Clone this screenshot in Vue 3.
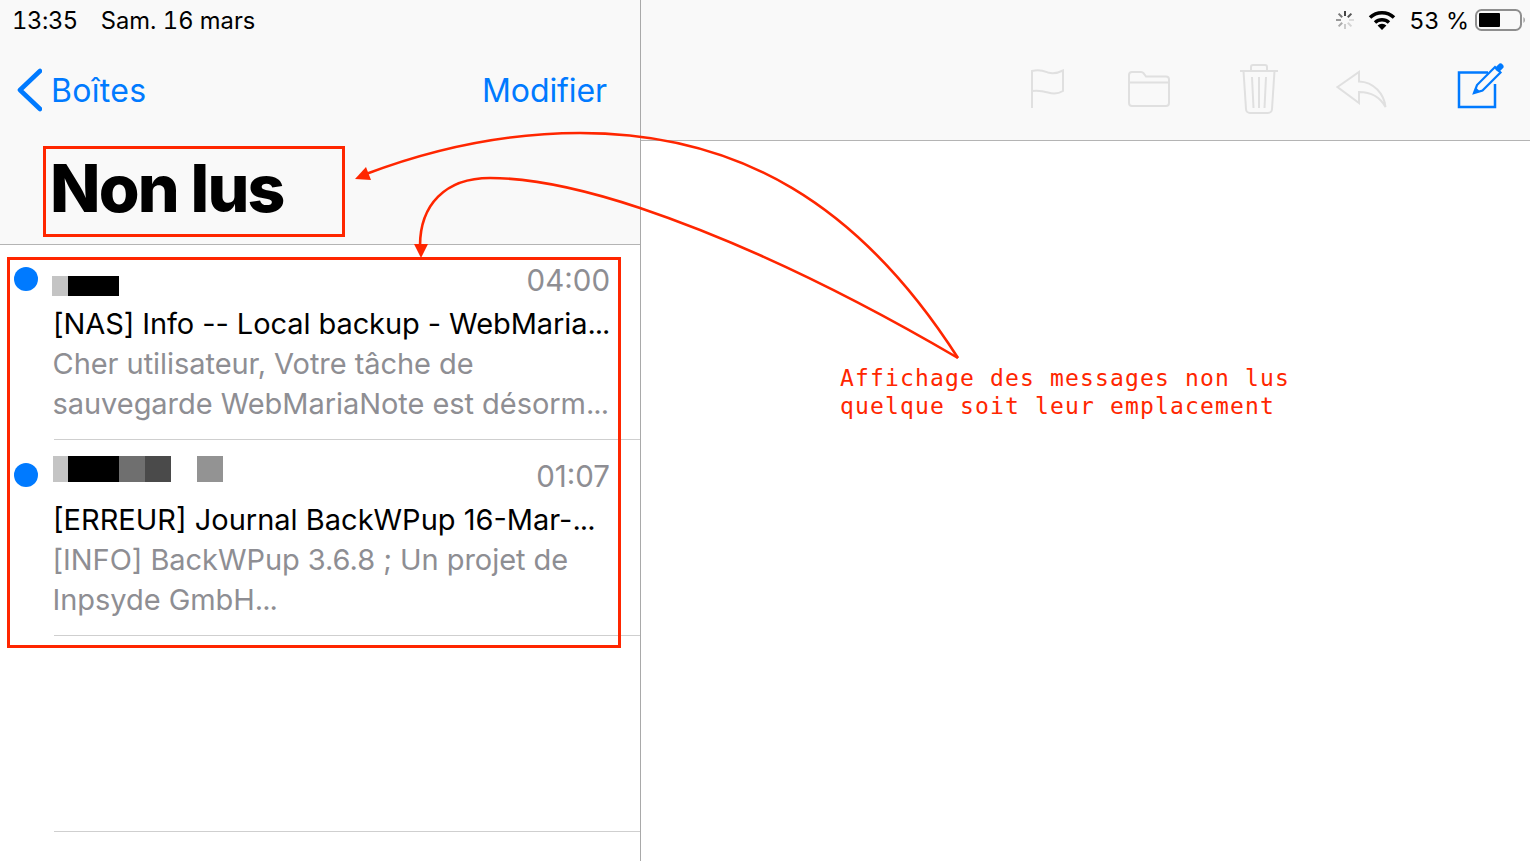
<script setup>
const messages = [
  { id: 1, time: '04:00', subject: '[NAS] Info -- Local backup - WebMaria', l1: 'Cher utilisateur, Votre tâche de', l2: 'sauvegarde WebMariaNote est désorm', blocks: [['#c4c4c4', 16], ['#000', 51]], tall: false },
  { id: 2, time: '01:07', subject: '[ERREUR] Journal BackWPup 16-Mar-', l1: '[INFO] BackWPup 3.6.8 ; Un projet de', l2: 'Inpsyde GmbH', blocks: [['#c4c4c4', 15], ['#000', 51], ['#6f6f6f', 26], ['#4a4a4a', 26], ['transparent', 26], ['#939393', 26]], tall: true },
]
</script>

<template>
  <div class="screen">
    <section class="left">
      <header class="left-head">
        <div class="status">
          <span class="time">13:35</span>
          <span class="date">Sam. 16 mars</span>
        </div>
        <nav class="nav">
          <a class="back">
            <svg width="26" height="44" viewBox="0 0 26 44"><path d="M24 3 L4 22 L24 41" fill="none" stroke="#007aff" stroke-width="4.6" stroke-linecap="round" stroke-linejoin="round"/></svg>
            <span>Boîtes</span>
          </a>
          <a class="edit">Modifier</a>
        </nav>
        <h1 class="title">Non lus</h1>
      </header>
      <ul class="list">
        <li v-for="m in messages" :key="m.id" class="msg" :class="{ tall: m.tall }">
          <span class="dot"></span>
          <div class="body">
            <div class="top">
              <div class="sender">
                <i v-for="(b, i) in m.blocks" :key="i" :style="{ background: b[0], width: b[1] + 'px' }"></i>
              </div>
              <span class="when">{{ m.time }}</span>
            </div>
            <div class="subject">{{ m.subject }}<span class="ell">...</span></div>
            <div class="preview">{{ m.l1 }}</div>
            <div class="preview">{{ m.l2 }}<span class="ell">...</span></div>
          </div>
        </li>
        <li class="empty"></li>
      </ul>
    </section>

    <section class="right">
      <header class="right-head">
        <div class="sys">
          <svg width="20" height="20" viewBox="0 0 20 20" class="spin">
            <g stroke-width="2" stroke-linecap="butt">
              <path d="M10 1v5" stroke="#444"/>
              <path d="M16.4 3.6 12.8 7.2" stroke="#555"/>
              <path d="M19 10h-5" stroke="#ddd"/>
              <path d="M16.4 16.4 12.8 12.8" stroke="#d4d4d4"/>
              <path d="M10 19v-5" stroke="#ccc"/>
              <path d="M3.6 16.4 7.2 12.8" stroke="#aaa"/>
              <path d="M1 10h5" stroke="#999"/>
              <path d="M3.6 3.6 7.2 7.2" stroke="#777"/>
            </g>
          </svg>
          <svg width="28" height="20" viewBox="0 0 28 20" class="wifi" fill="none">
            <path d="M2 7.500A17.500 17.500 0 0 1 26 7.500" stroke="#000" stroke-width="3.600"/>
            <path d="M7 12.500A10.200 10.200 0 0 1 21 12.500" stroke="#000" stroke-width="3.400"/>
            <path d="M14 20 9.600 15.600A6.400 6.400 0 0 1 18.400 15.600Z" fill="#000"/>
          </svg>
          <span class="pct">53 %</span>
          <svg width="55" height="24" viewBox="0 0 55 24" class="batt">
            <rect x="1" y="2" width="45" height="20" rx="5.500" fill="none" stroke="#8e8e8e" stroke-width="2"/>
            <rect x="4" y="5" width="21" height="14" rx="1" fill="#000"/>
            <path d="M48.500 9a4 4 0 0 1 0 6Z" fill="#8e8e8e"/>
          </svg>
        </div>
        <div class="tools">
          <svg class="t-flag" width="36" height="40" viewBox="0 0 36 40" fill="none" stroke="#e0e0e0" stroke-width="2">
            <path d="M2 40V3C10 1 14 3 18 4.500C23 6 28 5 33 2.500V23C28 26 23 26 18 24.500C13 23 8 22 2 23"/>
          </svg>
          <svg class="t-folder" width="44" height="38" viewBox="0 0 44 38" fill="none" stroke="#e0e0e0" stroke-width="2">
            <path d="M2 5a3 3 0 0 1 3-3h9a3 3 0 0 1 2.500 1.200L19 6.500h20a3 3 0 0 1 3 3V33a3 3 0 0 1-3 3H5a3 3 0 0 1-3-3Z"/>
            <path d="M2 12.500H42"/>
          </svg>
          <svg class="t-trash" width="38" height="50" viewBox="0 0 38 50" fill="none" stroke="#e0e0e0" stroke-width="2">
            <path d="M0 7h38"/>
            <path d="M11 7V3a2 2 0 0 1 2-2h12a2 2 0 0 1 2 2v4"/>
            <path d="M3.500 7 6 45a4 4 0 0 0 4 4h18a4 4 0 0 0 4-4l2.500-38"/>
            <path d="M12 13l1.500 31M19 13v31M26 13l-1.500 31"/>
          </svg>
          <svg class="t-reply" width="51" height="39" viewBox="0 0 51 39" fill="none" stroke="#e0e0e0" stroke-width="2">
            <path d="M1.500 17 23 2V11.500C38 12 48 24 49.500 37C44 27 36 22 23 22V33Z"/>
          </svg>
          <svg class="t-compose" width="50" height="48" viewBox="0 0 50 48" fill="none">
            <path d="M32 10.500H3V45H39V22" stroke="#007aff" stroke-width="2.500"/>
            <path d="M18 31 21 23 39 5 44.500 10.500 26.500 28.500Z" stroke="#007aff" stroke-width="2.200" fill="#fafafa"/>
            <path d="M18 31 20 25.500 23.500 29Z" fill="#007aff"/>
            <path d="M42.500 6.500 44.500 4.500" stroke="#007aff" stroke-width="6" stroke-linecap="round"/>
          </svg>
        </div>
      </header>
    </section>

    <svg class="arrows" width="1530" height="861" viewBox="0 0 1530 861" fill="none">
      <path d="M366 174C440 146 510 133 580 133C740 133 860 205 958 358" stroke="#ff2600" stroke-width="2.600"/>
      <path d="M958 358C830 283 720 235 640 208C580 188 530 178 490 178C445 178 420 205 420 246" stroke="#ff2600" stroke-width="2.600"/>
      <path d="M355 179 366 167 371 180Z" fill="#ff2600"/>
      <path d="M421 258 414 244H428Z" fill="#ff2600"/>
    </svg>
    <div class="box box-title"></div>
    <div class="box box-list"></div>
    <p class="note">Affichage des messages non lus<br>quelque soit leur emplacement</p>
  </div>
</template>

<style>
html, body { margin: 0; background: #fff; }
</style>

<style scoped>
.screen { position: relative; display: flex; width: 1530px; height: 861px; overflow: hidden; background: #fff; font-family: Inter, "Liberation Sans", sans-serif; color: #000; }
.left { width: 640px; flex: none; border-right: 1px solid #a9a9a9; }
.right { flex: 1; }
.left-head { height: 244px; background: #f9f9f9; border-bottom: 1px solid #b4b4b4; }
.status { display: flex; gap: 23px; padding: 6px 0 0 12px; font-size: 23.700px; line-height: 30px; font-variant-numeric: tabular-nums; }
.time { letter-spacing: -0.400px; }
.nav { display: flex; justify-content: space-between; align-items: center; height: 44px; margin-top: 32px; padding: 0 33px 0 16px; font-size: 32px; color: #007aff; }
.back { display: flex; align-items: center; gap: 9px; letter-spacing: 0.300px; }
.edit { letter-spacing: -0.100px; }
.title { margin: 38px 0 0 50px; font-size: 66px; line-height: 76px; font-weight: 800; letter-spacing: -1.800px; }
.list { margin: 0; padding: 0; list-style: none; }
.msg { display: flex; height: 195px; }
.msg.tall { height: 196px; }
.dot { flex: none; width: 24px; height: 24px; margin: 22px 16px 0 14px; border-radius: 50%; background: #007aff; }
.tall .dot { margin-top: 23px; }
.body { flex: 1; min-width: 0; padding: 17px 30px 0 0; border-bottom: 1px solid #cfcfcf; }
.tall .body { padding-top: 18px; }
.top { display: flex; justify-content: space-between; height: 42px; }
.sender { display: flex; height: 20px; margin: 14px 0 0 -2px; }
.tall .sender { height: 26px; margin: -2px 0 0 -1px; }
.when { font-size: 29.500px; line-height: 36px; color: #8e8e93; }
.subject { margin-left: -1px; font-size: 29px; line-height: 40px; white-space: nowrap; letter-spacing: -0.080px; }
.tall .subject { letter-spacing: 0; }
.preview { margin-left: -1.500px; font-size: 29px; line-height: 40px; color: #8e8e93; white-space: nowrap; letter-spacing: -0.050px; }
.ell { letter-spacing: -1px; }
.empty { height: 195px; margin-left: 54px; border-bottom: 1px solid #cfcfcf; }
.right-head { height: 140px; background: #f9f9f9; border-bottom: 1px solid #b4b4b4; }
.sys { display: flex; justify-content: flex-end; align-items: center; height: 40px; }
.spin { margin-right: 13px; }
.wifi { margin-right: 13px; }
.pct { font-size: 23.500px; margin-right: 6px; font-variant-numeric: tabular-nums; }
.tools { display: flex; align-items: flex-start; padding-left: 389px; }
.t-flag { margin-top: 28px; }
.t-folder { margin: 30px 0 0 61px; }
.t-trash { margin: 24px 0 0 69px; }
.t-reply { margin: 30px 0 0 58px; }
.t-compose { margin: 22px 0 0 69px; }
.arrows { position: absolute; left: 0; top: 0; pointer-events: none; }
.box { position: absolute; box-sizing: border-box; border: 3px solid #ff2600; }
.box-title { left: 43px; top: 146px; width: 302px; height: 91px; }
.box-list { left: 7px; top: 257px; width: 614px; height: 391px; }
.note { position: absolute; left: 840px; top: 364px; margin: 0; font-family: "DejaVu Sans Mono", monospace; font-size: 23px; line-height: 28px; letter-spacing: 1.150px; color: #ff2600; white-space: nowrap; }
</style>
